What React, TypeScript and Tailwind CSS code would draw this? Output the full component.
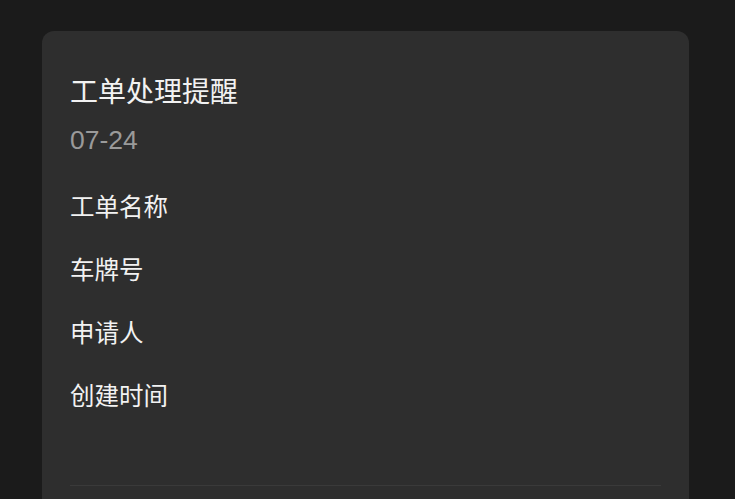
import React from "react";

export default function App() {
  const rows = ["工单名称", "车牌号", "申请人", "创建时间"];
  return (
    <div
      className="w-[735px] h-[499px] overflow-hidden bg-[#1b1b1b] pt-[31px] pl-[42px]"
      style={{ fontFamily: '"Liberation Sans", "Noto Sans CJK SC", sans-serif' }}
    >
      <div className="w-[647px] h-[520px] rounded-[12px] bg-[#2e2e2e] px-[28px] pt-[42px]">
        <div className="text-[28px] leading-[40px] text-[#f2f2f2]">工单处理提醒</div>
        <div className="mt-[9px] text-[26.5px] leading-[36px] text-[#9a9a9a]">07-24</div>
        <div className="mt-[19px] flex flex-col">
          {rows.map((r) => (
            <div key={r} className="h-[63px] flex items-center text-[24.5px] text-[#f2f2f2]">
              {r}
            </div>
          ))}
        </div>
        <div className="mt-[56px] h-px bg-[#3a3a3a]" />
      </div>
    </div>
  );
}
